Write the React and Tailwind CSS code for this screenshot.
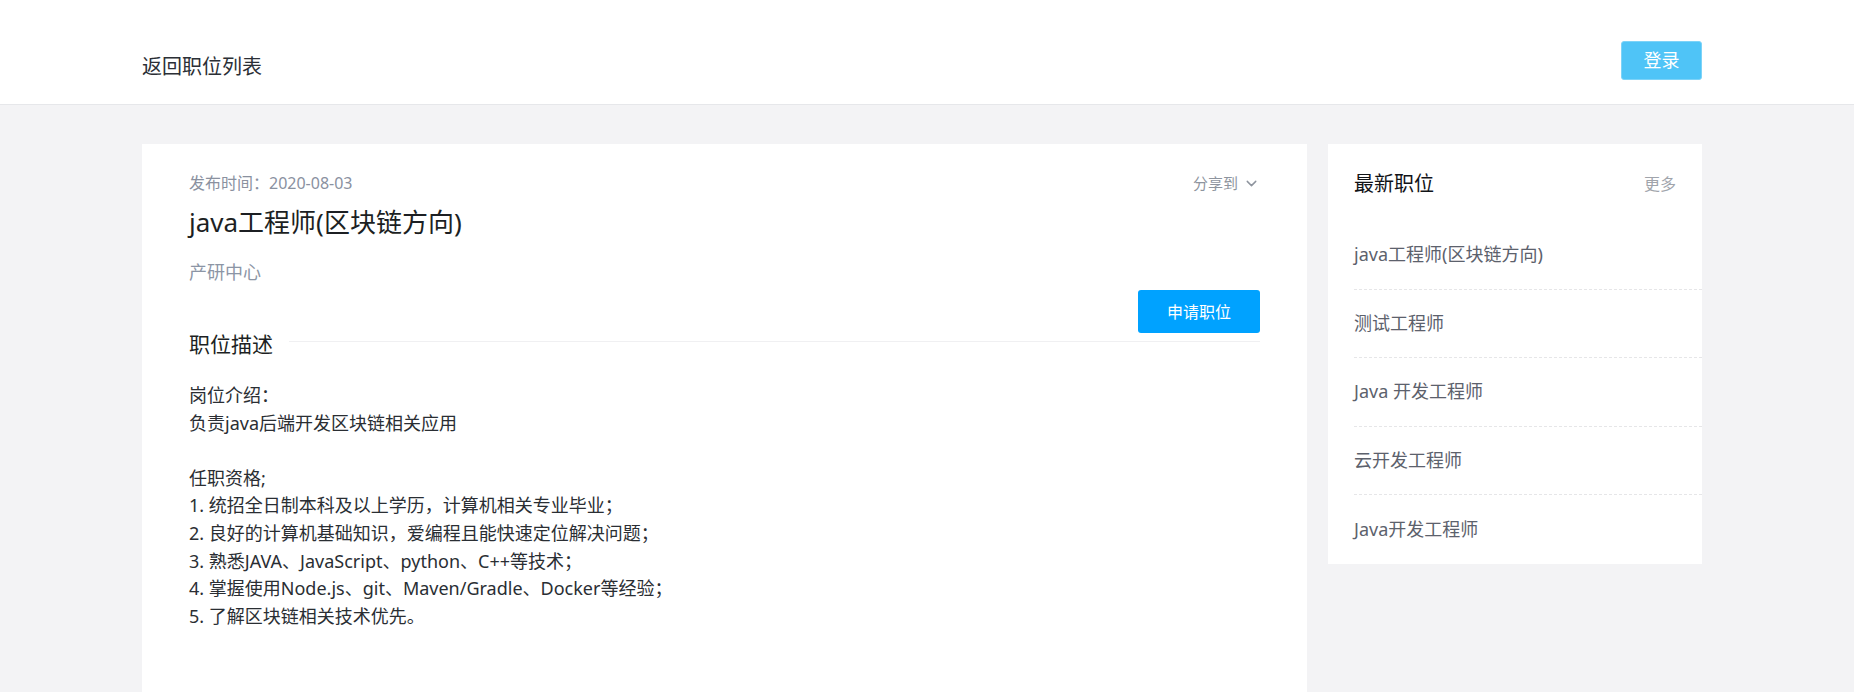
import React from "react";
import { ChevronDown } from "lucide-react";

const latest = [
  "java工程师(区块链方向)",
  "测试工程师",
  "Java 开发工程师",
  "云开发工程师",
  "Java开发工程师",
];

const desc = [
  "岗位介绍：",
  "负责java后端开发区块链相关应用",
  "",
  "任职资格;",
  "1. 统招全日制本科及以上学历，计算机相关专业毕业；",
  "2. 良好的计算机基础知识，爱编程且能快速定位解决问题；",
  "3. 熟悉JAVA、JavaScript、python、C++等技术；",
  "4. 掌握使用Node.js、git、Maven/Gradle、Docker等经验；",
  "5. 了解区块链相关技术优先。",
];

export default function App() {
  return (
    <div
      className="min-h-screen bg-[#f3f3f5]"
      style={{ fontFamily: '"Noto Sans", "Noto Sans CJK SC", sans-serif' }}
    >
      {/* header */}
      <header className="h-[105px] bg-white border-b border-[#e6e7ea]">
        <div className="ml-[142px] w-[1560px] flex justify-between items-start">
          <a className="mt-[53px] text-[20px] leading-[28px] text-[#2b2f36] cursor-pointer">
            返回职位列表
          </a>
          <button className="mt-[41px] w-[81px] h-[39px] rounded-[3px] bg-[#4fc4f7] border border-[#7dd3f8] text-white text-[18px]">
            登录
          </button>
        </div>
      </header>

      <div className="ml-[142px] w-[1560px] pt-[39px] flex gap-[21px] items-start">
        {/* main */}
        <div className="w-[1165px] bg-white px-[47px] pt-[27px] pb-[80px]">
          <div className="flex justify-between items-center">
            <span className="text-[16px] leading-[24px] text-[#8a919f]">发布时间：2020-08-03</span>
            <span className="flex items-center gap-[5px] text-[15px] leading-[24px] text-[#8e949e] cursor-pointer">
              分享到
              <ChevronDown size={17} strokeWidth={2} />
            </span>
          </div>
          <h1 className="mt-[9px] text-[26px] leading-[36px] text-[#1c1f23]">java工程师(区块链方向)</h1>
          <div className="mt-[19px] text-[18px] leading-[26px] text-[#8c95a5]">产研中心</div>
          <div className="mt-[5px] flex justify-end">
            <button className="w-[122px] h-[43px] rounded-[3px] bg-[#00a2ff] text-white text-[16px]">
              申请职位
            </button>
          </div>
          <div className="flex items-start">
            <h2 className="text-[21px] leading-[22px] text-[#1c1f23]">职位描述</h2>
            <div className="flex-1 ml-[16px] mt-[8px] h-px bg-[#f0f0f2]" />
          </div>
          <div className="mt-[27px] text-[18px] leading-[27.6px] text-[#2a2e33]">
            {desc.map((l, i) => (
              <div key={i} className="min-h-[27.6px]">{l}</div>
            ))}
          </div>
        </div>

        {/* sidebar */}
        <div className="w-[374px] bg-white">
          <div className="h-[77px] px-[26px] pt-[2px] flex justify-between items-center">
            <span className="text-[20px] text-[#111317]">最新职位</span>
            <span className="text-[16px] text-[#a0a4ab] cursor-pointer">更多</span>
          </div>
          <ul className="pl-[26px]">
            {latest.map((t, i) => (
              <li
                key={i}
                className={
                  "h-[68.6px] flex items-center text-[18px] text-[#5c616c] " +
                  (i < latest.length - 1 ? "border-b border-dashed border-[#e6e6e8]" : "")
                }
              >
                {t}
              </li>
            ))}
          </ul>
        </div>
      </div>
    </div>
  );
}
